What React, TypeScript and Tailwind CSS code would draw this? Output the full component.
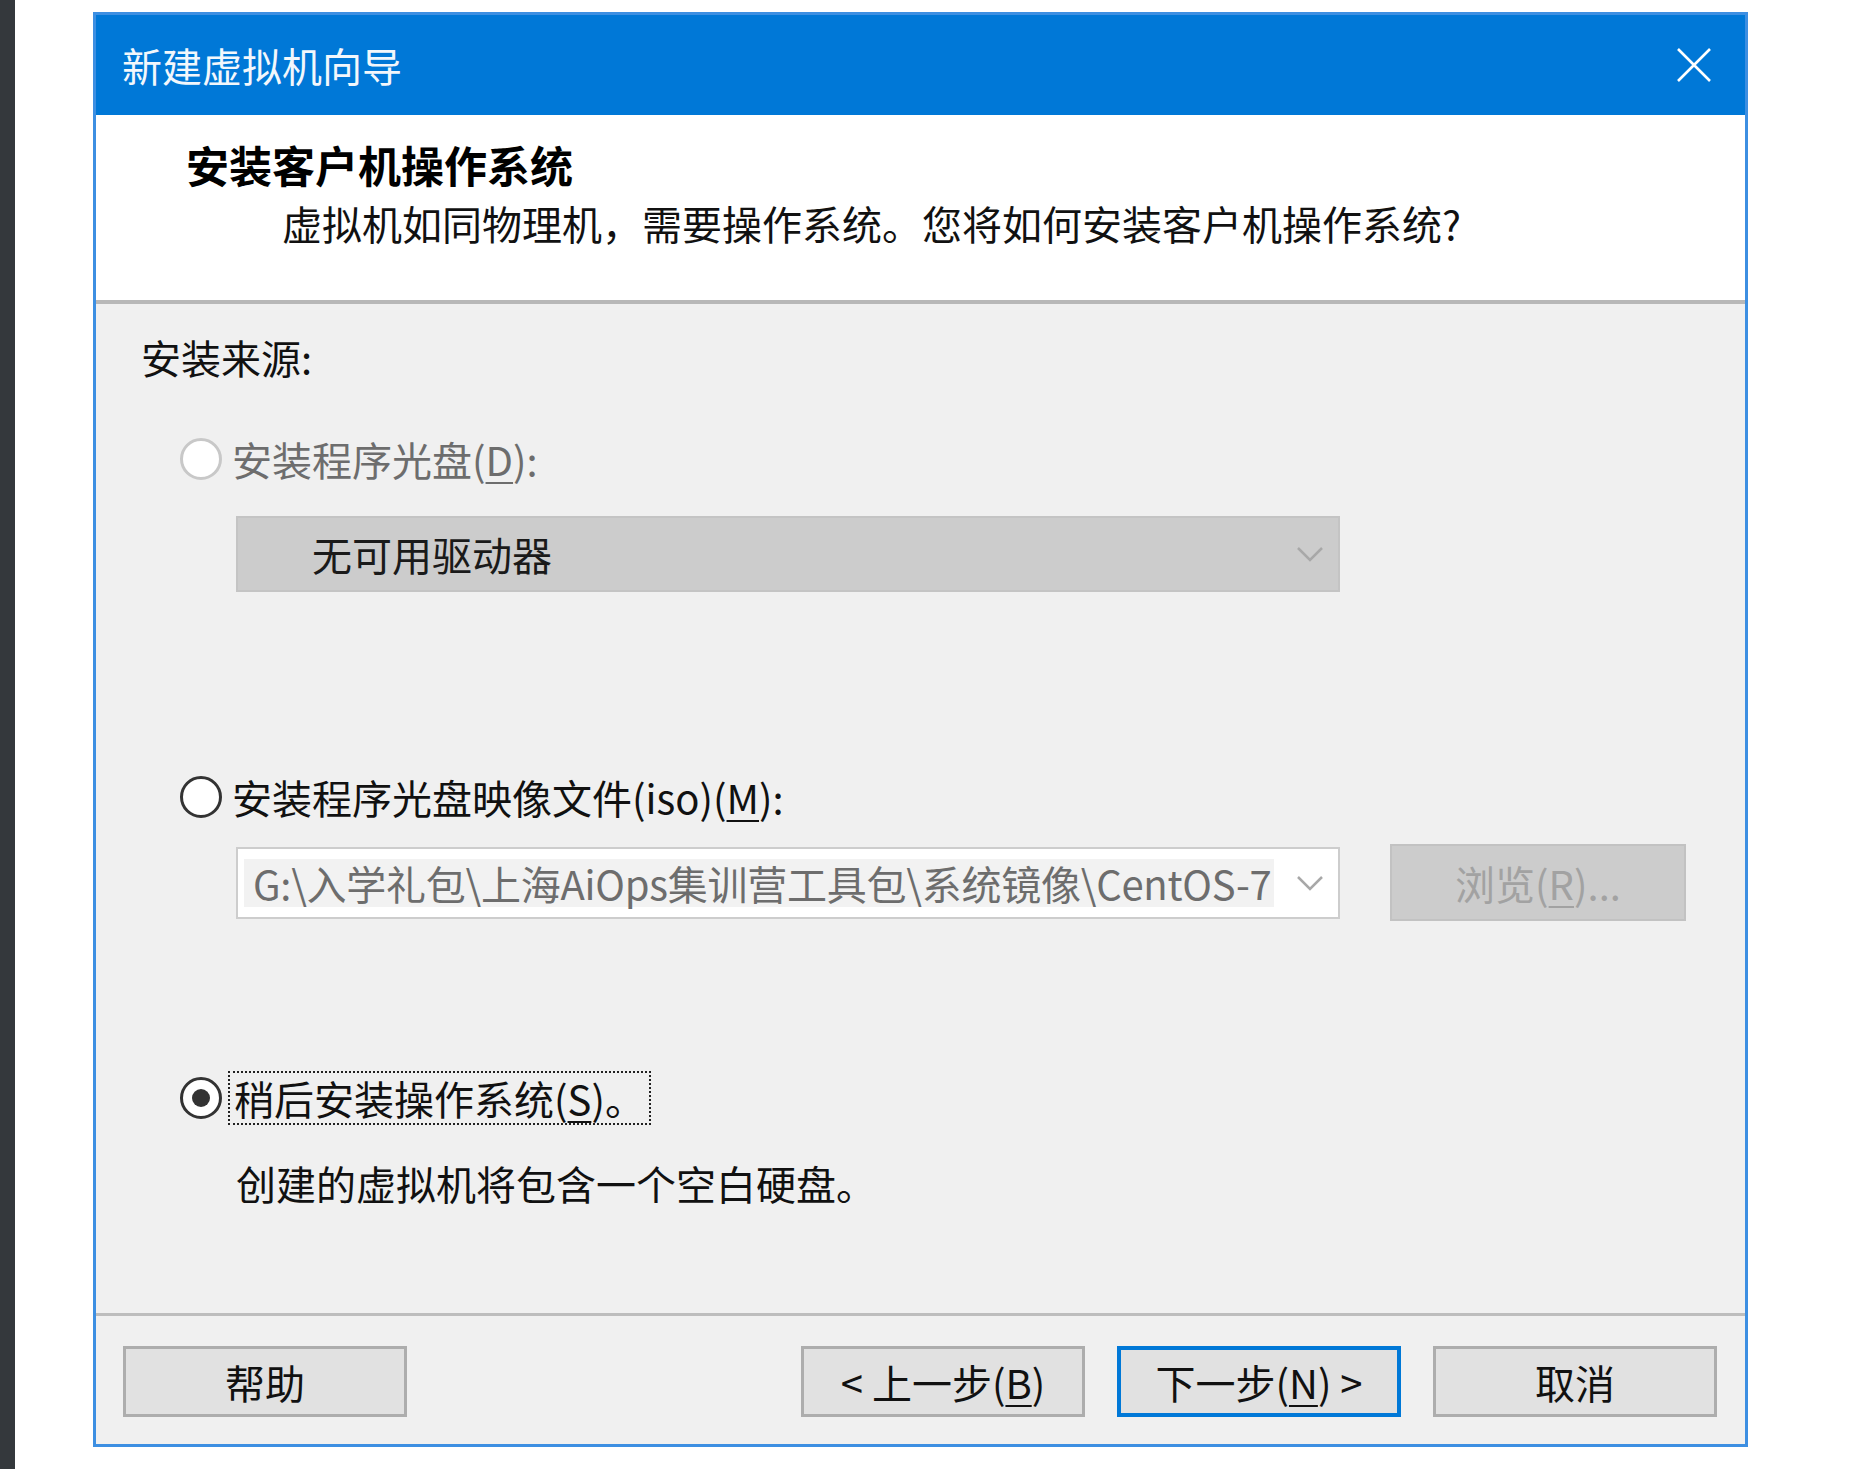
import React from 'react';

const font = "font-['Noto_Sans_CJK_SC','Noto_Sans',sans-serif]";

const Radio = ({ state }: { state: 'disabled' | 'off' | 'on' }) => {
  if (state === 'disabled') {
    return <div className="w-[42px] h-[42px] rounded-full border-[3px] border-[#c8c8c8] bg-white shrink-0" />;
  }
  return (
    <div className="w-[42px] h-[42px] rounded-full border-[3px] border-[#333333] bg-white shrink-0 flex items-center justify-center">
      {state === 'on' && <div className="w-[18px] h-[18px] rounded-full bg-[#333333]" />}
    </div>
  );
};

const Chevron = () => (
  <svg width="28" height="16" viewBox="0 0 28 16" fill="none" className="shrink-0">
    <path d="M2 2 L14 14 L26 2" stroke="#a8a8a8" strokeWidth="2.5" />
  </svg>
);

const Mn = ({ children }: { children: React.ReactNode }) => (
  <span className="underline underline-offset-[6px] decoration-2">{children}</span>
);

const Button = ({ children, primary }: { children: React.ReactNode; primary?: boolean }) => (
  <button
    className={`h-[71px] w-[284px] flex items-center justify-center bg-[#e1e1e1] text-[40px] leading-none text-[#111] ${
      primary ? 'border-[4px] border-[#0078d7]' : 'border-[3px] border-[#adadad]'
    }`}
  >
    {children}
  </button>
);

export default function App() {
  return (
    <div className={`w-[1862px] h-[1469px] bg-white flex ${font}`}>
      {/* left edge of the host window */}
      <div className="w-[15px] h-full bg-[#34383c]" />

      {/* dialog */}
      <div className="ml-[78px] mt-[12px] w-[1655px] h-[1435px] border-[3px] border-[#3d8fe2] flex flex-col">
        {/* title bar */}
        <div className="h-[100px] bg-[#0078d7] flex items-center justify-between pl-[26px] pr-[33px]">
          <span className="text-[40px] leading-none text-[#f2f7fc]">新建虚拟机向导</span>
          <svg width="36" height="36" viewBox="0 0 36 36">
            <path d="M2 2 L34 34 M34 2 L2 34" stroke="#ffffff" strokeWidth="2.6" />
          </svg>
        </div>

        {/* header */}
        <div className="h-[185px] bg-white pt-[25px]">
          <div className="pl-[90px] text-[43px] leading-[48px] font-bold text-black">安装客户机操作系统</div>
          <div className="pl-[186px] mt-[11px] text-[40px] leading-[48px] text-[#111]">
            虚拟机如同物理机，需要操作系统。您将如何安装客户机操作系统?
          </div>
        </div>
        <div className="h-[4px] bg-[#b8b8b8]" />

        {/* body */}
        <div className="h-[1009px] bg-[#f0f0f0] flex flex-col text-[40px] leading-[48px] text-[#111]">
          <div className="mt-[29px] pl-[45px]">安装来源:</div>

          <div className="mt-[54px] pl-[84px] flex items-center gap-[10px] h-[48px]">
            <Radio state="disabled" />
            <span className="text-[#6d6d6d]">
              安装程序光盘(<Mn>D</Mn>):
            </span>
          </div>

          <div className="mt-[33px] ml-[140px] w-[1104px] h-[76px] bg-[#cccccc] border-2 border-[#c4c4c4] flex items-center justify-between pl-[74px] pr-[14px]">
            <span className="text-[#1a1a1a]">无可用驱动器</span>
            <Chevron />
          </div>

          <div className="mt-[181px] pl-[84px] flex items-center gap-[10px] h-[48px]">
            <Radio state="off" />
            <span>
              安装程序光盘映像文件(iso)(<Mn>M</Mn>):
            </span>
          </div>

          <div className="mt-[23px] ml-[140px] h-[77px] flex items-center gap-[50px]">
            <div className="w-[1104px] h-[72px] bg-white border-2 border-[#cdcdcd] flex items-center justify-between pl-[6px] pr-[14px] overflow-hidden">
              <span className="bg-[#f2f2f2] text-[#6d6d6d] pl-[9px] pr-[2px] whitespace-nowrap tracking-[-0.25px]">
                G:\入学礼包\上海AiOps集训营工具包\系统镜像\CentOS-7
              </span>
              <Chevron />
            </div>
            <div className="w-[296px] h-[77px] bg-[#cccccc] border-2 border-[#c2c2c2] flex items-center justify-center text-[#a2a2a2]">
              浏览(<Mn>R</Mn>)...
            </div>
          </div>

          <div className="mt-[153px] pl-[84px] flex items-center gap-[6px] h-[48px]">
            <Radio state="on" />
            <span className="border-2 border-dotted border-[#222] px-[4px] leading-[50px]">
              稍后安装操作系统(<Mn>S</Mn>)。
            </span>
          </div>

          <div className="mt-[37px] pl-[140px]">创建的虚拟机将包含一个空白硬盘。</div>
        </div>

        {/* footer */}
        <div className="h-[3px] bg-[#bdbdbd]" />
        <div className="flex-1 bg-[#f0f0f0] pt-[30px] pl-[27px] pr-[28px] flex">
          <Button>帮助</Button>
          <div className="flex-1" />
          <div className="flex gap-[32px]">
            <Button>
              &lt; 上一步(<Mn>B</Mn>)
            </Button>
            <Button primary>
              下一步(<Mn>N</Mn>) &gt;
            </Button>
            <Button>取消</Button>
          </div>
        </div>
      </div>
    </div>
  );
}
